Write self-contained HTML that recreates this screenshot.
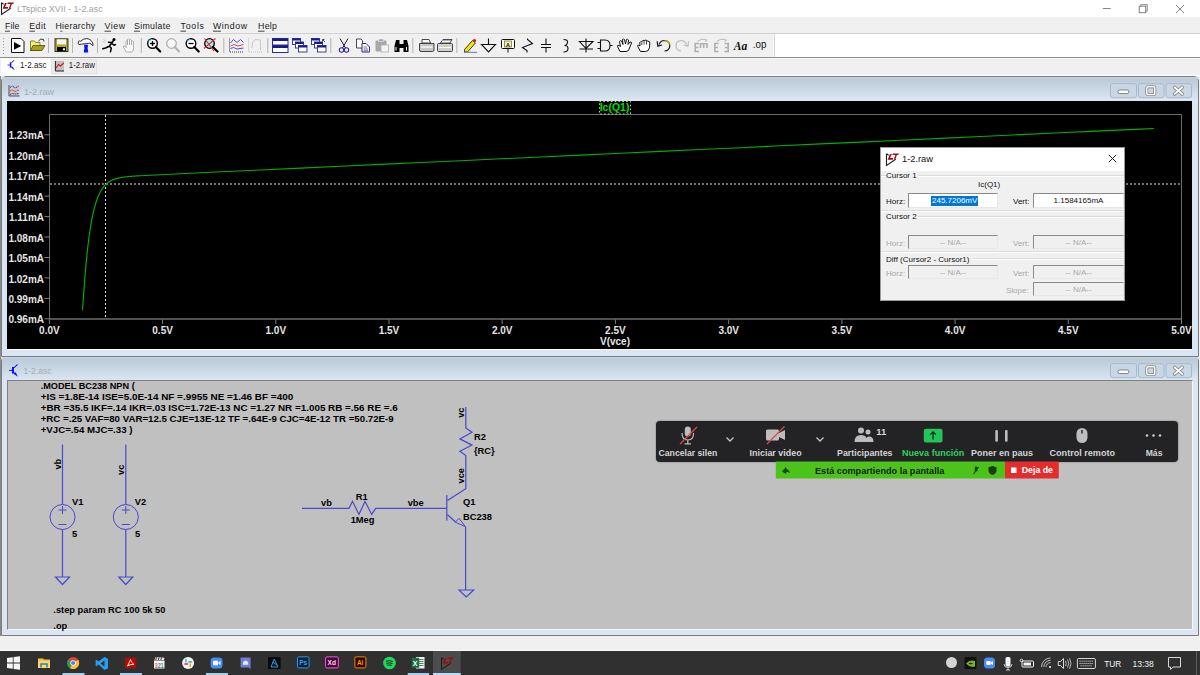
<!DOCTYPE html>
<html><head><meta charset="utf-8">
<style>
*{box-sizing:border-box;margin:0;padding:0}
html,body{width:1200px;height:675px;overflow:hidden;background:#f0f0f0;font-family:"Liberation Sans",sans-serif;position:relative}
.a{position:absolute}
svg text{font-family:"Liberation Sans",sans-serif}
.pl{fill:#e6e6e6;font-size:10px;font-weight:bold}
.sc{fill:#000;font-size:9.3px;font-weight:bold}
#title{left:0;top:0;width:1200px;height:17px;background:#fff}
#title .t{left:17px;top:2px;font-size:11.5px;color:#9a9a9a;white-space:nowrap}
#menu{left:0;top:17px;width:1200px;height:16px;background:#f0f0f0}
#menu span{position:absolute;top:2px;font-size:11px;color:#111;white-space:nowrap}
#tb{left:0;top:33px;width:1200px;height:24px;background:#fff;border-top:1px solid #a0a0a0;border-bottom:1px solid #a0a0a0}
#tbg{left:0;top:0;width:774px;height:22px;background:#f0f0f0;border-right:1px solid #ddd}
#tabs{left:0;top:57px;width:1200px;height:19px;background:#f0f0f0}
.win{background:#dae6f3;border:1px solid #7c7c7c}
.wt{left:0;top:0;right:0;height:24px;background:linear-gradient(#c6d3e0,#bccbd9 10%,#dbe7f3)}
.wt .n{left:20px;top:6px;font-size:11px;color:#9aa3ab}
.wbtn{top:5px;width:26px;height:15px;border:1px solid #a9b7c5;border-radius:3px;background:linear-gradient(#d3dde8,#c7d3df)}
.et{height:2px;border-top:1px solid #dcdcdc;border-bottom:1px solid #fff}
.dl{font-size:8px;color:#111;white-space:nowrap;line-height:11px}
.dis{color:#a8a8a8}
.ib{border:1px solid;border-color:#8a8a8a #e8e8e8 #e8e8e8 #8a8a8a}
.zl text{fill:#d4d4d4;font-size:8.6px;font-weight:bold}
.zs{fill:#1a1a1a;font-size:8.8px;font-weight:bold}
#taskbar{left:0;top:651px;width:1200px;height:24px;background:#2b2b2b}
</style></head><body>
<div class="a" style="left:0;top:76px;width:1px;height:560px;background:#8a8a8a"></div>
<div id="w1" class="a win" style="left:1px;top:76px;width:1198px;height:281px;border-radius:5px 5px 0 0">
  <div class="a wt"></div>
  <div class="a" style="left:5px;top:24px;width:1185px;height:249px;background:#000;border-bottom:1px solid #fff"></div>
</div>
<div id="w2" class="a win" style="left:1px;top:356px;width:1198px;height:280px;border-radius:5px 5px 0 0">
  <div class="a wt"></div>
  <div class="a" style="left:5px;top:23px;width:1186px;height:250px;background:#c0c0c0;border-left:1px solid #808080;border-top:1px solid #808080;border-bottom:1px solid #f6f6f6;border-right:1px solid #f6f6f6"></div>
</div>
<svg class="a" style="left:0;top:0" width="1200" height="675" viewBox="0 0 1200 675">
<!-- title bar -->
<rect x="0" y="0" width="1200" height="17.5" fill="#fff"/>
<g><path d="M1.5 2.5 V14.5 L10.7 8.3 M1.5 2.8 L3.6 4.3" fill="none" stroke="#202020" stroke-width="1.1"/>
 <path d="M4.9 3 H6.8 L5.1 7.1 H8.2 L7.7 8.7 H2.7 Z" fill="#a00c0c"/>
 <path d="M7.8 2.5 H13.9 L13.3 4.1 H11.9 L10.2 8.4 H8.7 L10.4 4.1 H7.3 Z" fill="#a00c0c"/></g>
<text x="17" y="11.6" textLength="85.6" lengthAdjust="spacingAndGlyphs" style="font-size:9.6px;fill:#a0a0a0">LTspice XVII - 1-2.asc</text>
<path d="M1102.8 8.5 H1110.6" stroke="#777" stroke-width="0.9"/>
<rect x="1139.2" y="6.2" width="6.5" height="6.5" fill="none" stroke="#777" stroke-width="0.9"/>
<path d="M1140.8 6.2 V4.7 H1147.2 V11.2 H1145.7" fill="none" stroke="#777" stroke-width="0.9"/>
<path d="M1176 5 L1184 13 M1184 5 L1176 13" stroke="#777" stroke-width="0.9"/>
<!-- menu -->
<rect x="0" y="17.5" width="1200" height="15.5" fill="#f0f0f0"/>
<g style="font-size:8.8px;fill:#1a1a1a">
 <text x="5" y="29.3" textLength="14.3">File</text>
 <text x="29.3" y="29.3" textLength="16.5">Edit</text>
 <text x="55.5" y="29.3" textLength="39.7">Hierarchy</text>
 <text x="104.5" y="29.3" textLength="20.5">View</text>
 <text x="134" y="29.3" textLength="36.5">Simulate</text>
 <text x="180.5" y="29.3" textLength="23.5">Tools</text>
 <text x="213" y="29.3" textLength="34">Window</text>
 <text x="258" y="29.3" textLength="19">Help</text>
</g>
<g stroke="#1a1a1a" stroke-width="0.8">
 <path d="M5 31.2 H10 M29.3 31.2 H35 M60.3 31.2 H62.3 M104.5 31.2 H111 M134 31.2 H140 M180.5 31.2 H186 M213 31.2 H221 M258 31.2 H264.5"/>
</g>
<rect x="0" y="33" width="1200" height="1" fill="#d2d2d2"/>
<!-- toolbar band -->
<rect x="0" y="34" width="1200" height="23" fill="#fff"/>
<rect x="0" y="34" width="774" height="23" fill="#f0f0f0"/>
<rect x="773" y="34" width="1" height="23" fill="#fafafa"/><rect x="774" y="34" width="1" height="23" fill="#d4d4d4"/>
<rect x="0" y="57" width="1200" height="1" fill="#8c8c8c"/>
<!-- tabs -->
<rect x="0" y="58" width="1200" height="17" fill="#f0f0f0"/>
<rect x="0" y="58" width="1200" height="1" fill="#f8f8f8"/>
<rect x="1" y="58" width="50" height="17.5" fill="#fff"/>
<rect x="51.5" y="59.5" width="45" height="14" fill="#ebebeb" stroke="#e2e2e2" stroke-width="1"/>
<text x="20" y="68.4" textLength="26.5" lengthAdjust="spacingAndGlyphs" style="font-size:8.8px;fill:#1a1a1a">1-2.asc</text>
<text x="68.8" y="68.4" textLength="26" lengthAdjust="spacingAndGlyphs" style="font-size:8.8px;fill:#1a1a1a">1-2.raw</text>
<rect x="0" y="75" width="1200" height="1" fill="#fff"/>
<!-- asc tab icon (transistor) -->
<g fill="#1010f0" transform="translate(0.3 -227.6) scale(0.79)">
<rect x="12" y="367" width="2" height="6.6"/>
<rect x="9.1" y="369.9" width="3" height="1"/>
<path d="M13.8 367.3 L17.2 364 L17.9 364.8 L14.2 368.3 Z"/>
<path d="M13.8 372.5 L15.8 372.6 L18 376.8 L14.2 374.2 Z"/>
</g>
<!-- raw tab icon -->
<rect x="55" y="61" width="9" height="10" fill="#c0c0c0"/>
<path d="M55.4 61 V71 H64" fill="none" stroke="#222" stroke-width="1"/>
<path d="M56 68 L58.5 64.5 L60.5 66 L63.8 63" fill="none" stroke="#e01010" stroke-width="1.1"/>
<!-- MDI window 1 title -->
<g transform="translate(8.5 85)">
 <rect x="0" y="0" width="11" height="11" fill="#c8c8c8"/>
 <path d="M0.5 0 V11 H11" fill="none" stroke="#555" stroke-width="1"/>
 <path d="M1.5 2.5 L4 1 L6.5 3 L10.5 1" fill="none" stroke="#3030d0" stroke-width="1" stroke-dasharray="1.2 .6"/>
 <path d="M1.5 6 L4 5 L6.5 6.5 L10.5 5" fill="none" stroke="#e03030" stroke-width="1" stroke-dasharray="1.2 .6"/>
 <path d="M1.5 9.5 L4 8.5 L6.5 9 L10.5 8.5" fill="none" stroke="#3030d0" stroke-width="1" stroke-dasharray="1.2 .6"/>
</g>
<text x="24" y="94.5" textLength="30" lengthAdjust="spacingAndGlyphs" style="font-size:9.5px;fill:#a4acb4">1-2.raw</text>
<!-- MDI window 2 title -->
<g fill="#1010f0">
<rect x="12" y="367" width="2" height="6.6"/>
<rect x="9.1" y="369.9" width="3" height="1"/>
<path d="M13.8 367.3 L17.2 364 L17.9 364.8 L14.2 368.3 Z"/>
<path d="M13.8 372.5 L15.8 372.6 L18 376.8 L14.2 374.2 Z"/>
</g>
<text x="23.5" y="374.3" textLength="28" lengthAdjust="spacingAndGlyphs" style="font-size:9.5px;fill:#a4acb4">1-2.asc</text>
<g transform="translate(0 83.2)">
 <rect x="1110.5" y="0.5" width="26" height="14" rx="2" fill="#c9d6e3" stroke="#a9b9ca" stroke-width="1"/>
 <rect x="1138.5" y="0.5" width="25.5" height="14" rx="2" fill="#c9d6e3" stroke="#a9b9ca" stroke-width="1"/>
 <rect x="1166" y="0.5" width="25.5" height="14" rx="2" fill="#c9d6e3" stroke="#a9b9ca" stroke-width="1"/>
 <rect x="1118" y="6.8" width="10.8" height="3.5" rx="1.5" fill="#fff" stroke="#6a6a6a" stroke-width="0.8"/>
 <rect x="1146.8" y="3.6" width="8" height="7.6" rx="1" fill="none" stroke="#707070" stroke-width="2.8"/>
 <rect x="1146.8" y="3.6" width="8" height="7.6" rx="1" fill="none" stroke="#fff" stroke-width="1.5"/>
 <path d="M1174.6 4 L1182.2 10.8 M1182.2 4 L1174.6 10.8" stroke="#707070" stroke-width="3.2" stroke-linecap="round"/>
 <path d="M1174.6 4 L1182.2 10.8 M1182.2 4 L1174.6 10.8" stroke="#fff" stroke-width="1.9" stroke-linecap="round"/>
</g>
<g transform="translate(0 363.2)">
 <rect x="1110.5" y="0.5" width="26" height="14" rx="2" fill="#c9d6e3" stroke="#a9b9ca" stroke-width="1"/>
 <rect x="1138.5" y="0.5" width="25.5" height="14" rx="2" fill="#c9d6e3" stroke="#a9b9ca" stroke-width="1"/>
 <rect x="1166" y="0.5" width="25.5" height="14" rx="2" fill="#c9d6e3" stroke="#a9b9ca" stroke-width="1"/>
 <rect x="1118" y="6.8" width="10.8" height="3.5" rx="1.5" fill="#fff" stroke="#6a6a6a" stroke-width="0.8"/>
 <rect x="1146.8" y="3.6" width="8" height="7.6" rx="1" fill="none" stroke="#707070" stroke-width="2.8"/>
 <rect x="1146.8" y="3.6" width="8" height="7.6" rx="1" fill="none" stroke="#fff" stroke-width="1.5"/>
 <path d="M1174.6 4 L1182.2 10.8 M1182.2 4 L1174.6 10.8" stroke="#707070" stroke-width="3.2" stroke-linecap="round"/>
 <path d="M1174.6 4 L1182.2 10.8 M1182.2 4 L1174.6 10.8" stroke="#fff" stroke-width="1.9" stroke-linecap="round"/>
</g>
</svg>

<svg class="a" style="left:0;top:0" width="780" height="60" viewBox="0 0 780 60">
<!-- grip -->
<g fill="#a0a0a0"><rect x="3" y="38" width="1" height="1"/><rect x="3" y="41" width="1" height="1"/><rect x="3" y="44" width="1" height="1"/><rect x="3" y="47" width="1" height="1"/><rect x="3" y="50" width="1" height="1"/><rect x="3" y="53" width="1" height="1"/></g>
<!-- separators -->
<g fill="#b4b4b4">
<rect x="48" y="38" width="1" height="15"/><rect x="72" y="38" width="1" height="15"/><rect x="97" y="38" width="1" height="15"/>
<rect x="140.8" y="38" width="1" height="15"/><rect x="223.3" y="38" width="1" height="15"/><rect x="267.3" y="38" width="1" height="15"/>
<rect x="330.3" y="38" width="1" height="15"/><rect x="412.3" y="38" width="1" height="15"/><rect x="456.3" y="38" width="1" height="15"/>
</g>
<!-- run doc -->
<path d="M11.5 38.5 H21 L24 41.5 V52.5 H11.5 Z" fill="#fff" stroke="#111" stroke-width="1"/>
<path d="M14 42 L21.3 46 L14 49.8 Z" fill="#000"/>
<!-- open folder -->
<path d="M30.5 41 H34.5 L35.5 42.5 H40 V50.5 H30.5 Z" fill="#f0f07a" stroke="#6a6a10" stroke-width="0.8"/>
<path d="M30.5 50.5 L33 45.5 H45 L42 50.5 Z" fill="#a8a020" stroke="#4a4a08" stroke-width="0.8"/>
<path d="M38.5 41 Q40.5 38 43.5 39.5 L44 41.5" fill="none" stroke="#333" stroke-width="1"/>
<!-- save -->
<rect x="55" y="38.8" width="13" height="12.8" fill="#b0a820" stroke="#222" stroke-width="0.9"/>
<rect x="57" y="39.3" width="9" height="5.2" fill="#f4f4f4"/>
<rect x="57" y="47" width="9" height="4.3" fill="#000"/>
<rect x="63" y="48.3" width="2" height="2" fill="#fff"/>
<!-- hammer -->
<path d="M78.3 41.5 Q79.5 40.5 80.5 41.3 Q83 38.5 87 38.6 Q91.5 39.2 93 44 L92.8 45.8 Q91.5 43.5 89.5 43.2 Q86 43.8 84 43.8 Q81.5 44 80 44.5 Q78.5 45 78.3 43.5 Z" fill="#fff" stroke="#1a1a1a" stroke-width="0.9"/>
<path d="M84 44.8 H88 L87.6 48.5 Q88.2 49.5 88.2 52.5 H83.8 Q83.8 49.5 84.5 48.5 Z" fill="#0818e8"/>
<!-- runner -->
<g fill="none" stroke="#000" stroke-width="1.5" stroke-linecap="round" stroke-linejoin="round">
<path d="M113.5 40.5 L109.3 46.3 L105.5 48 L102.8 48.8 M109.3 46.3 L111.3 48 L110.5 51.8 M111.5 43.3 L114.2 45.2 L115.5 44.6 M111.8 42.5 L108.5 42.3"/>
</g>
<circle cx="114" cy="39.6" r="1.5" fill="#000"/>
<path d="M103.5 39.5 L106.3 41.3 M102.8 41.3 L105 42.5" stroke="#bbb" stroke-width="0.8"/>
<!-- hand gray -->
<path d="M126 52 L123.5 47 Q123 45.5 124.5 46 L126 47.5 V41 Q126.5 39.8 127.5 41 V45 V39.5 Q128.5 38.2 129.5 39.5 V45 V39.8 Q130.5 38.8 131.5 40 V45 V41.5 Q132.5 40.5 133.5 41.5 V48 Q133.5 51 132 52 Z" fill="#f8f8f8" stroke="#a8a8a8" stroke-width="0.9"/>
<!-- zoom in -->
<g>
<circle cx="152.5" cy="43.5" r="4.8" fill="#fff" stroke="#000" stroke-width="1.4"/>
<path d="M148.5 41.5 Q150 39.5 152 39.5" stroke="#30d0e8" stroke-width="1.2" fill="none"/>
<path d="M155.8 47 L160.2 51.5" stroke="#000" stroke-width="2.2" stroke-linecap="round"/>
<path d="M150 43.5 H155 M152.5 41 V46" stroke="#000" stroke-width="1.3"/>
</g>
<!-- zoom gray -->
<circle cx="171.5" cy="43.5" r="4.8" fill="#f6f6f6" stroke="#b0b0b0" stroke-width="1.3"/>
<path d="M174.8 47 L179 51.5" stroke="#b0b0b0" stroke-width="2" stroke-linecap="round"/>
<!-- zoom out -->
<circle cx="191" cy="43.5" r="4.8" fill="#fff" stroke="#000" stroke-width="1.4"/>
<path d="M187 41.5 Q188.5 39.5 190.5 39.5" stroke="#30d0e8" stroke-width="1.2" fill="none"/>
<path d="M194.3 47 L198.7 51.5" stroke="#000" stroke-width="2.2" stroke-linecap="round"/>
<path d="M188.5 43.5 H193.5" stroke="#000" stroke-width="1.3"/>
<!-- zoom cancel -->
<circle cx="209.5" cy="43.5" r="4.8" fill="#a0f0f8" stroke="#000" stroke-width="1.3"/>
<path d="M212.8 47 L217.5 51.5" stroke="#000" stroke-width="2.2" stroke-linecap="round"/>
<path d="M204.5 38.5 L214 51 M215.5 38.5 L204 48.5" stroke="#f02020" stroke-width="1.1"/>
<!-- plot icon -->
<path d="M229.5 38.5 V52 H244" fill="none" stroke="#222" stroke-width="0.9" stroke-dasharray="1 1"/>
<path d="M230.5 43 L233.5 39.5 L237 42.5 L240.5 39.5 L243.5 42.5" fill="none" stroke="#3a3ad8" stroke-width="0.9"/>
<path d="M230.5 46 L234 44.5 L238 46 L243.5 44.5" fill="none" stroke="#e03030" stroke-width="0.9"/>
<path d="M230.5 48.5 L233.5 47.5 L237 49 L243.5 48" fill="none" stroke="#3a3ad8" stroke-width="0.9"/>
<!-- gray plot icon -->
<path d="M248.5 38.5 V52 H263" fill="none" stroke="#b8b8b8" stroke-width="0.9" stroke-dasharray="1 1"/>
<path d="M252 48 Q252 40 256 39.5 L260.5 40 V50" fill="none" stroke="#c4c4c4" stroke-width="0.9"/>
<!-- tile -->
<rect x="272.5" y="38.5" width="15.5" height="6.5" fill="#fff" stroke="#2a2a9a" stroke-width="1"/>
<rect x="272.5" y="38.5" width="15.5" height="2.5" fill="#1a1a8a"/>
<rect x="272.5" y="45.5" width="15.5" height="7" fill="#fff" stroke="#2a2a9a" stroke-width="1"/>
<rect x="272.5" y="45.5" width="15.5" height="2.5" fill="#1a1a8a"/>
<!-- cascade -->
<g id="casc">
<rect x="292.5" y="38.5" width="8" height="6" fill="#fff" stroke="#2a2a9a" stroke-width="0.9"/><rect x="292.5" y="38.5" width="8" height="2" fill="#1a1a8a"/>
<rect x="295.5" y="42" width="8" height="6" fill="#fff" stroke="#2a2a9a" stroke-width="0.9"/><rect x="295.5" y="42" width="8" height="2" fill="#1a1a8a"/>
<rect x="298.5" y="45.5" width="8.5" height="6.5" fill="#fff" stroke="#2a2a9a" stroke-width="0.9"/><rect x="298.5" y="45.5" width="8.5" height="2" fill="#1a1a8a"/>
</g>
<g transform="translate(19 0)">
<rect x="292.5" y="38.5" width="8" height="6" fill="#fff" stroke="#2a2a9a" stroke-width="0.9"/><rect x="292.5" y="38.5" width="8" height="2" fill="#1a1a8a"/>
<rect x="295.5" y="42" width="8" height="6" fill="#fff" stroke="#2a2a9a" stroke-width="0.9"/><rect x="295.5" y="42" width="8" height="2" fill="#1a1a8a"/>
<rect x="298.5" y="45.5" width="8.5" height="6.5" fill="#fff" stroke="#2a2a9a" stroke-width="0.9"/><rect x="298.5" y="45.5" width="8.5" height="2" fill="#1a1a8a"/>
<path d="M306 42 L303.5 39.5 M303.5 41.5 V39.5 H305.5" fill="none" stroke="#333" stroke-width="0.9"/>
</g>
<!-- scissors -->
<path d="M340 38.5 L345.5 48 M348 38.5 L342.5 48" stroke="#222" stroke-width="1"/>
<circle cx="341.5" cy="50" r="2.2" fill="none" stroke="#2a2ab0" stroke-width="1.1"/>
<circle cx="346.5" cy="50" r="2.2" fill="none" stroke="#2a2ab0" stroke-width="1.1"/>
<!-- copy -->
<path d="M356.5 39 H361 L362.5 40.5 V48 H356.5 Z" fill="#fff" stroke="#333" stroke-width="0.9"/>
<path d="M362 43.5 H366 L369.5 47 V52 H362 Z" fill="#fff" stroke="#2a2a9a" stroke-width="1"/>
<path d="M363.5 47 H367 M363.5 49 H368 M363.5 50.8 H368" stroke="#333" stroke-width="0.7"/>
<!-- paste gray -->
<rect x="375.5" y="40.5" width="11" height="11" rx="1" fill="#a8a8a8"/>
<rect x="378.5" y="39" width="5" height="2.5" fill="#a8a8a8" stroke="#f0f0f0" stroke-width="0.6"/>
<rect x="381" y="45" width="7.5" height="7" fill="#f4f4f4" stroke="#b0b0b0" stroke-width="0.8"/>
<!-- binoculars -->
<path d="M394.5 52 V46 L396 40 H399.5 V44 H403.5 V40 H407 L408.5 46 V52 H403.5 V48 H399.5 V52 Z" fill="#000"/>
<path d="M396 47 V50.5 M406.5 47 V50.5" stroke="#fff" stroke-width="1"/>
<!-- printer -->
<path d="M422 39.5 H429 L430.5 43 H422 Z" fill="#fff" stroke="#333" stroke-width="0.9"/>
<path d="M419.5 43.5 H434 V50 Q434 51.5 432.5 51.5 H421 Q419.5 51.5 419.5 50 Z" fill="#c8c8c8" stroke="#333" stroke-width="0.9"/>
<rect x="421" y="46.5" width="11.5" height="1.2" fill="#fff"/>
<!-- printer2 -->
<path d="M440.5 43 L443 39.5 H452 L450 43 Z" fill="#fff" stroke="#333" stroke-width="0.9"/>
<path d="M442 40.5 L451 40.5" stroke="#999" stroke-width="0.8"/>
<rect x="437.5" y="43.5" width="15" height="8" rx="1" fill="#d0d0d0" stroke="#333" stroke-width="0.9"/>
<rect x="439" y="47" width="12" height="1" fill="#fff"/><rect x="444" y="46" width="3" height="1" fill="#e0d020"/>
<!-- pencil -->
<path d="M464.5 49.5 L472.5 40.5 L475.5 43 L467.5 52 L464.5 52 Z" fill="#f0e800" stroke="#222" stroke-width="0.9"/>
<circle cx="474.5" cy="40.5" r="1.6" fill="#e81010"/>
<rect x="464" y="51.8" width="13" height="1.2" fill="#8080f0"/>
<!-- ground -->
<path d="M488.5 38.5 V44 M481.5 44.5 H495.5 L488.5 52 Z" fill="none" stroke="#111" stroke-width="1.1"/>
<!-- label -->
<rect x="501.5" y="39.5" width="13" height="9" rx="1" fill="#fffff0" stroke="#111" stroke-width="1"/>
<rect x="504.5" y="41" width="7" height="6" fill="#f4f4a0" stroke="#444" stroke-width="0.6"/>
<text x="508" y="46.5" text-anchor="middle" style="font-size:5.5px;font-weight:bold;fill:#111">A</text>
<path d="M508 48.5 V52.5" stroke="#111" stroke-width="1"/>
<!-- resistor -->
<path d="M527.5 38.5 V39.5 L532.5 43.5 L522.5 47.5 L527 50.5 V52.5" fill="none" stroke="#111" stroke-width="1.1"/>
<!-- capacitor -->
<path d="M546 38.5 V44 M541 44.5 H551 M541 47.5 H551 M546 48 V52.5" fill="none" stroke="#111" stroke-width="1.1"/>
<!-- inductor -->
<path d="M563.5 39.5 Q568 39.5 567.5 42.5 Q567 45.5 564.5 45.5 Q568 45.5 568 48.5 Q568 52 563.5 52" fill="none" stroke="#111" stroke-width="1.1"/>
<!-- diode -->
<path d="M586 38.5 V52.5 M579.5 41.5 H593 L586 48.5 Z M579.5 49 H593" fill="none" stroke="#111" stroke-width="1.1"/>
<!-- and gate -->
<path d="M600.5 40 H605 Q610 40 610 45.5 Q610 51 605 51 H600.5 Z M597.5 42.5 H600.5 M597.5 48.5 H600.5 M610 45.5 H612.5" fill="none" stroke="#111" stroke-width="1.1"/>
<!-- hand 1 -->
<path d="M620 51.5 L617.5 46.5 Q617 45 619 45.5 L620.5 46.5 L619.5 41.5 Q620 40 621.5 41 L623 44.5 L622.5 39.5 Q623.5 38.5 624.5 39.5 L625.5 44 L626.5 39.5 Q627.5 38.8 628.5 40 L628 44.5 L630 42 Q631.5 41.5 631.5 43 L629.5 48 Q629 51.5 626 51.5 Z" fill="#fff" stroke="#111" stroke-width="1"/>
<!-- hand 2 -->
<path d="M640.5 51.5 L637.8 46.5 Q637.3 45 638.8 45.3 L640 46 L639.8 42.5 Q640.3 41.3 641.5 42 L642.2 41 Q643 39.8 644.2 40.6 L645 40.3 Q646.2 39.6 647 40.8 L648 41.2 Q649.8 41.2 649.8 43 L649.5 47.5 Q648.8 51.5 645.5 51.5 Z" fill="#fff" stroke="#111" stroke-width="1"/>
<path d="M641.8 42.5 V45 M644 41 V44.5 M646.5 41 V44.5" stroke="#111" stroke-width="0.8"/>
<!-- undo -->
<path d="M659 44.5 Q660.5 40.5 664.5 40.5 Q669.8 41 669.8 46 Q669.5 50.8 664.5 51" fill="none" stroke="#1a1a1a" stroke-width="1.2"/>
<path d="M664.5 40.6 Q668.5 41 669.6 44.5" fill="none" stroke="#c8b000" stroke-width="1.2"/>
<path d="M657.2 41.2 L657.8 46.2 L662 45" fill="none" stroke="#1a1a1a" stroke-width="1.2"/>
<!-- redo gray -->
<path d="M686.5 44.5 Q685 40.5 681 40.5 Q676 41 676 46 Q676.3 50.8 681 51" fill="none" stroke="#bcbcbc" stroke-width="1.2"/>
<path d="M688.5 41.2 L688 46.2 L683.8 45" fill="none" stroke="#bcbcbc" stroke-width="1.2"/>
<!-- mirror gray -->
<g fill="none" stroke="#b0b0b0" stroke-width="1.6">
<path d="M699 43.5 H695.2 V51.5 H699 M695.2 47.5 H698.5 M700.5 48 V43.8 H707 V48 M703.7 43.8 V48"/>
<path d="M718.5 43.5 H714.8 V51.5 H718.5 M714.8 47.5 H718 M724.5 43.5 H728.2 V51.5 H724.5 M728.2 47.5 H725"/>
</g>
<g fill="none" stroke="#b8b8b8" stroke-width="1">
<path d="M697.5 41.5 Q701 38.3 705.5 39.3 L706.5 40.8 M705 41.3 L706.5 40.8 L706.8 39.2"/>
<path d="M716.5 41.5 Q720.5 38.3 725 39.3 L726 40.8 M724.5 41.3 L726 40.8 L726.3 39.2"/>
</g>
<!-- Aa -->
<text x="733.8" y="50.3" textLength="13.5" lengthAdjust="spacingAndGlyphs" style="font-family:'Liberation Serif',serif;font-size:12.5px;font-weight:bold;font-style:italic;fill:#111">Aa</text>
<!-- .op -->
<text x="752.8" y="48.3" textLength="13.6" lengthAdjust="spacingAndGlyphs" style="font-size:10.4px;fill:#111">.op</text>
</svg>

<svg class="a" style="left:0;top:0" width="1200" height="675" viewBox="0 0 1200 675">
<path d="M49.5 319 V114.5 H1181.5 V319" fill="none" stroke="#6c6c6c" stroke-width="1"/>
<path d="M49 319 H1182" fill="none" stroke="#a0a0a0" stroke-width="1"/>
<line x1="44.5" y1="134.8" x2="49.5" y2="134.8" stroke="#808080"/>
<text x="44" y="139.4" text-anchor="end" class="pl">1.23mA</text>
<line x1="44.5" y1="155.2" x2="49.5" y2="155.2" stroke="#808080"/>
<text x="44" y="159.8" text-anchor="end" class="pl">1.20mA</text>
<line x1="44.5" y1="175.7" x2="49.5" y2="175.7" stroke="#808080"/>
<text x="44" y="180.3" text-anchor="end" class="pl">1.17mA</text>
<line x1="44.5" y1="196.1" x2="49.5" y2="196.1" stroke="#808080"/>
<text x="44" y="200.7" text-anchor="end" class="pl">1.14mA</text>
<line x1="44.5" y1="216.6" x2="49.5" y2="216.6" stroke="#808080"/>
<text x="44" y="221.2" text-anchor="end" class="pl">1.11mA</text>
<line x1="44.5" y1="237.0" x2="49.5" y2="237.0" stroke="#808080"/>
<text x="44" y="241.6" text-anchor="end" class="pl">1.08mA</text>
<line x1="44.5" y1="257.5" x2="49.5" y2="257.5" stroke="#808080"/>
<text x="44" y="262.1" text-anchor="end" class="pl">1.05mA</text>
<line x1="44.5" y1="277.9" x2="49.5" y2="277.9" stroke="#808080"/>
<text x="44" y="282.5" text-anchor="end" class="pl">1.02mA</text>
<line x1="44.5" y1="298.4" x2="49.5" y2="298.4" stroke="#808080"/>
<text x="44" y="303.0" text-anchor="end" class="pl">0.99mA</text>
<line x1="44.5" y1="318.8" x2="49.5" y2="318.8" stroke="#808080"/>
<text x="44" y="323.4" text-anchor="end" class="pl">0.96mA</text>
<line x1="49.4" y1="319.5" x2="49.4" y2="324" stroke="#808080"/>
<text x="49.4" y="333.6" text-anchor="middle" class="pl">0.0V</text>
<line x1="162.6" y1="319.5" x2="162.6" y2="324" stroke="#808080"/>
<text x="162.6" y="333.6" text-anchor="middle" class="pl">0.5V</text>
<line x1="275.8" y1="319.5" x2="275.8" y2="324" stroke="#808080"/>
<text x="275.8" y="333.6" text-anchor="middle" class="pl">1.0V</text>
<line x1="389.0" y1="319.5" x2="389.0" y2="324" stroke="#808080"/>
<text x="389.0" y="333.6" text-anchor="middle" class="pl">1.5V</text>
<line x1="502.2" y1="319.5" x2="502.2" y2="324" stroke="#808080"/>
<text x="502.2" y="333.6" text-anchor="middle" class="pl">2.0V</text>
<line x1="615.4" y1="319.5" x2="615.4" y2="324" stroke="#808080"/>
<text x="615.4" y="333.6" text-anchor="middle" class="pl">2.5V</text>
<line x1="728.7" y1="319.5" x2="728.7" y2="324" stroke="#808080"/>
<text x="728.7" y="333.6" text-anchor="middle" class="pl">3.0V</text>
<line x1="841.9" y1="319.5" x2="841.9" y2="324" stroke="#808080"/>
<text x="841.9" y="333.6" text-anchor="middle" class="pl">3.5V</text>
<line x1="955.1" y1="319.5" x2="955.1" y2="324" stroke="#808080"/>
<text x="955.1" y="333.6" text-anchor="middle" class="pl">4.0V</text>
<line x1="1068.3" y1="319.5" x2="1068.3" y2="324" stroke="#808080"/>
<text x="1068.3" y="333.6" text-anchor="middle" class="pl">4.5V</text>
<line x1="1181.5" y1="319.5" x2="1181.5" y2="324" stroke="#808080"/>
<text x="1181.5" y="333.6" text-anchor="middle" class="pl">5.0V</text>
<text x="615" y="345" text-anchor="middle" class="pl">V(vce)</text>
<line x1="105.5" y1="115" x2="105.5" y2="318" stroke="#e0e0e0" stroke-dasharray="2 2"/>
<line x1="50" y1="184" x2="1181" y2="184" stroke="#e0e0e0" stroke-dasharray="2 2"/>
<path d="M82.5 310.4 L83.2 299.3 L84.0 289.2 L84.7 279.8 L85.4 271.3 L86.1 263.4 L86.8 256.3 L87.5 249.7 L88.2 243.6 L88.9 238.1 L89.6 233.0 L90.3 228.4 L91.0 224.1 L91.7 220.2 L92.4 216.6 L93.1 213.3 L93.8 210.3 L94.5 207.6 L95.2 205.0 L95.9 202.7 L96.6 200.6 L97.3 198.6 L98.0 196.8 L98.7 195.2 L99.4 193.7 L100.1 192.3 L100.8 191.0 L101.5 189.8 L102.2 188.8 L102.9 187.8 L103.6 186.9 L104.3 186.0 L105.0 185.3 L105.7 184.6 L106.4 183.9 L107.1 183.3 L107.8 182.8 L108.5 182.2 L109.2 181.8 L109.9 181.4 L110.6 181.0 L111.3 180.6 L112.0 180.2 L112.7 179.9 L113.4 179.6 L114.1 179.4 L114.8 179.1 L115.5 178.9 L116.2 178.7 L116.9 178.5 L117.6 178.3 L118.3 178.1 L119.0 178.0 L119.7 177.8 L120.4 177.7 L121.1 177.5 L121.8 177.4 L122.5 177.3 L123.2 177.2 L123.9 177.1 L124.6 177.0 L125.3 176.9 L126.0 176.8 L126.7 176.7 L127.4 176.7 L128.1 176.6 L128.8 176.5 L129.5 176.5 L130.2 176.4 L130.9 176.3 L131.6 176.3 L132.3 176.2 L133.0 176.2 L133.7 176.1 L134.4 176.1 L135.1 176.0 L135.8 176.0 L136.5 175.9 L137.2 175.9 L137.9 175.8 L138.6 175.8 L139.2 175.7 L139.9 175.7 L140.6 175.7 L180.6 173.7 L220.6 171.8 L260.6 170.0 L300.6 168.1 L340.6 166.3 L380.6 164.4 L420.6 162.5 L460.6 160.7 L500.6 158.8 L540.6 157.0 L580.6 155.1 L620.6 153.2 L660.6 151.4 L700.6 149.5 L740.6 147.7 L780.6 145.8 L820.6 143.9 L860.6 142.1 L900.6 140.2 L940.6 138.4 L980.6 136.5 L1020.6 134.6 L1060.7 132.8 L1100.7 130.9 L1140.7 129.1 L1153.8 128.5" fill="none" stroke="#00b000" stroke-width="1.15"/>
<rect x="599.5" y="101.5" width="31" height="12.5" fill="#000" stroke="#c8c8c8" stroke-dasharray="1.6 2.2"/>
<text x="614.6" y="110.8" text-anchor="middle" class="pl" style="fill:#00e000;font-size:10.5px">Ic(Q1)</text>
</svg>
<svg class="a" style="left:0;top:0" width="1200" height="675" viewBox="0 0 1200 675">
<g fill="none" stroke="#4848d0" stroke-width="1.2">
<!-- V1 -->
<path d="M62.5 444.5 V504.5 M62.5 529.5 V577 M55.5 577 H69.5 L62.5 584.5 Z"/>
<circle cx="62.5" cy="517" r="12.5" stroke-width="1"/>
<path d="M58.5 510 H66.5 M62.5 506 V514 M58.5 524.5 H66.5" stroke-width="1"/>
<!-- V2 -->
<path d="M125.8 444.5 V504.5 M125.8 529.5 V577 M118.8 577 H132.8 L125.8 584.5 Z"/>
<circle cx="125.8" cy="517" r="12.5" stroke-width="1"/>
<path d="M121.8 510 H129.8 M125.8 506 V514 M121.8 524.5 H129.8" stroke-width="1"/>
<!-- R1 and base wire -->
<path d="M302 508.3 H349 L352.5 501.3 L359 514.4 L365 501.3 L371.7 514.4 L375.7 508.3 H447"/>
<!-- R2 -->
<path d="M465.8 407 V428 L472 432.2 L459.9 438.9 L472 445.1 L459.9 451.3 L465.8 455.5 V488.7 L447.4 500.6"/>
<!-- Q1 base bar -->
<path d="M446.8 495 V520.5"/>
<path d="M447.5 514.8 L455.5 522 M465.6 526.7 V590 M458.9 590 H473.7 L466.3 597 Z"/>
<path d="M465.3 526.6 L459 518.3 L455.3 522.2 Z" stroke-width="1"/>
</g>
<g class="sc">
<text x="40.7" y="389" textLength="94" lengthAdjust="spacingAndGlyphs" style="font-size:9.7px">.MODEL BC238 NPN (</text>
<text x="40.7" y="400" textLength="252.5" lengthAdjust="spacingAndGlyphs" style="font-size:9.7px">+IS =1.8E-14 ISE=5.0E-14 NF =.9955 NE =1.46 BF =400</text>
<text x="40.7" y="411" textLength="357" lengthAdjust="spacingAndGlyphs" style="font-size:9.7px">+BR =35.5 IKF=.14 IKR=.03 ISC=1.72E-13 NC =1.27 NR =1.005 RB =.56 RE =.6</text>
<text x="40.7" y="422" textLength="353" lengthAdjust="spacingAndGlyphs" style="font-size:9.7px">+RC =.25 VAF=80 VAR=12.5 CJE=13E-12 TF =.64E-9 CJC=4E-12 TR =50.72E-9</text>
<text x="40.7" y="433" textLength="91.8" lengthAdjust="spacingAndGlyphs" style="font-size:9.7px">+VJC=.54 MJC=.33 )</text>
<text x="72" y="504.6">V1</text>
<text x="72" y="536.5">5</text>
<text x="134.8" y="504.6">V2</text>
<text x="135" y="536.5">5</text>
<text transform="translate(61 469.6) rotate(-90)">vb</text>
<text transform="translate(124.3 475) rotate(-90)">vc</text>
<text transform="translate(464 417.8) rotate(-90)">vc</text>
<text transform="translate(464 483.5) rotate(-90)">vce</text>
<text x="474" y="439.5">R2</text>
<text x="474" y="453.5">{RC}</text>
<text x="463" y="505">Q1</text>
<text x="463" y="519.5">BC238</text>
<text x="321" y="505.6">vb</text>
<text x="355.7" y="499.7">R1</text>
<text x="350.7" y="523.3">1Meg</text>
<text x="407.7" y="505.6">vbe</text>
<text x="53.3" y="612.8">.step param RC 100 5k 50</text>
<text x="53.3" y="628.5">.op</text>
</g>
</svg>

<div id="dlg" class="a" style="left:880px;top:147px;width:245px;height:154px;background:#f0f0f0;border:1px solid #9a9a9a">
  <div class="a" style="left:0;top:0;width:243px;height:23px;background:#fff"></div>
  <svg class="a" style="left:4px;top:3px" width="16" height="16" viewBox="0 0 16 16"><path d="M1.5 2.5 V14.5 L10.7 8.3 M1.5 2.8 L3.6 4.3" fill="none" stroke="#202020" stroke-width="1.1"/>
 <path d="M4.9 3 H6.8 L5.1 7.1 H8.2 L7.7 8.7 H2.7 Z" fill="#a00c0c"/>
 <path d="M7.8 2.5 H13.9 L13.3 4.1 H11.9 L10.2 8.4 H8.7 L10.4 4.1 H7.3 Z" fill="#a00c0c"/></svg>
  <div class="a dt" style="left:21px;top:6px;font-size:9.3px;color:#111">1-2.raw</div>
  <svg class="a" style="left:227px;top:6px" width="9" height="9" viewBox="0 0 9 9"><path d="M0.8 0.8 L8.2 8.2 M8.2 0.8 L0.8 8.2" stroke="#222" stroke-width="1"/></svg>
  <!-- etched lines -->
  <div class="a et" style="left:0;top:27px;width:5px"></div>
  <div class="a et" style="left:37px;top:27px;width:206px"></div>
  <div class="a et" style="left:0;top:62px;width:243px"></div>
  <div class="a et" style="left:37px;top:68px;width:206px"></div>
  <div class="a et" style="left:0;top:103px;width:243px"></div>
  <div class="a et" style="left:92px;top:110px;width:151px"></div>
  <div class="a dl" style="left:5px;top:22px">Cursor 1</div>
  <div class="a dl" style="left:97px;top:31px">Ic(Q1)</div>
  <div class="a dl" style="left:5px;top:48px">Horz:</div>
  <div class="a ib" style="left:27px;top:45px;width:90px;height:15px;background:#fff"><span class="a" style="left:22px;top:2px;width:47px;height:10px;background:#0078d7"></span><span class="a dl" style="left:23px;top:1px;color:#fff">245.7206mV</span></div>
  <div class="a dl" style="left:132px;top:48px">Vert:</div>
  <div class="a ib" style="left:152px;top:45px;width:91px;height:15px;background:#fff"><span class="a dl" style="left:0;width:89px;text-align:center;top:1px">1.1584165mA</span></div>
  <div class="a dl" style="left:5px;top:63px">Cursor 2</div>
  <div class="a dl dis" style="left:5px;top:90px">Horz:</div>
  <div class="a ib" style="left:27px;top:87px;width:90px;height:14px"><span class="a dl dis" style="left:0;width:88px;text-align:center;top:1px">-- N/A--</span></div>
  <div class="a dl dis" style="left:132px;top:90px">Vert:</div>
  <div class="a ib" style="left:152px;top:87px;width:91px;height:14px"><span class="a dl dis" style="left:0;width:89px;text-align:center;top:1px">-- N/A--</span></div>
  <div class="a dl" style="left:5px;top:106px">Diff (Cursor2 - Cursor1)</div>
  <div class="a dl dis" style="left:5px;top:120px">Horz:</div>
  <div class="a ib" style="left:27px;top:117px;width:90px;height:14px"><span class="a dl dis" style="left:0;width:88px;text-align:center;top:1px">-- N/A--</span></div>
  <div class="a dl dis" style="left:132px;top:120px">Vert:</div>
  <div class="a ib" style="left:152px;top:117px;width:91px;height:14px"><span class="a dl dis" style="left:0;width:89px;text-align:center;top:1px">-- N/A--</span></div>
  <div class="a dl dis" style="left:125px;top:137px">Slope:</div>
  <div class="a ib" style="left:152px;top:134px;width:91px;height:14px"><span class="a dl dis" style="left:0;width:89px;text-align:center;top:1px">-- N/A--</span></div>
</div>

<div id="zb" class="a" style="left:656px;top:420.5px;width:521.5px;height:41px;background:#232325;border-radius:4px;box-shadow:0 0 2px rgba(0,0,0,.4)"></div>
<svg class="a" style="left:0;top:0" width="1200" height="675" viewBox="0 0 1200 675">
 <!-- mic muted -->
 <g fill="none" stroke="#bdbdbd" stroke-width="1.6">
  <rect x="684.8" y="426.5" width="6" height="10" rx="3" fill="#bdbdbd" stroke="none"/>
  <path d="M682 433 Q682 440 687.8 440 Q693.6 440 693.6 433 M687.8 440 V443.5 M684.5 443.8 H691" stroke-width="1.2"/>
 </g>
 <path d="M680 444 L697 427" stroke="#e04848" stroke-width="1.3"/>
 <path d="M726.5 437.5 L730 441 L733.5 437.5" fill="none" stroke="#c8c8c8" stroke-width="1.3"/>
 <!-- video muted -->
 <rect x="766" y="429.5" width="13" height="11" rx="1.5" fill="#bdbdbd"/>
 <path d="M779 433 L785 430 V440 L779 437 Z" fill="#bdbdbd"/>
 <path d="M767 444 L784.5 426.5" stroke="#e04848" stroke-width="1.3"/>
 <path d="M816.5 437.5 L820 441 L823.5 437.5" fill="none" stroke="#c8c8c8" stroke-width="1.3"/>
 <!-- participants -->
 <circle cx="861" cy="430.5" r="3" fill="#bdbdbd"/>
 <path d="M854.5 442 Q854.5 435 861 435 Q867.5 435 867.5 442 Z" fill="#bdbdbd"/>
 <circle cx="868" cy="432" r="2.5" fill="#bdbdbd"/>
 <path d="M865 442 Q866 436.5 869 436.5 Q873.5 436.5 873.5 442 Z" fill="#bdbdbd"/>
 <!-- nueva funcion -->
 <rect x="923.8" y="428.8" width="18.7" height="13.7" rx="2" fill="#23c45a"/>
 <path d="M933.1 439.5 V432 M930.3 434.6 L933.1 431.8 L935.9 434.6" fill="none" stroke="#0e2e16" stroke-width="1.3"/>
 <!-- pause -->
 <rect x="995.3" y="430" width="2.6" height="11.8" rx="1" fill="#bdbdbd"/>
 <rect x="1005" y="430" width="2.6" height="11.8" rx="1" fill="#bdbdbd"/>
 <!-- mouse -->
 <rect x="1076.5" y="428" width="11" height="15" rx="5.5" fill="#bdbdbd"/>
 <rect x="1081.3" y="430" width="1.4" height="3.5" fill="#232325"/>
 <!-- dots -->
 <circle cx="1147" cy="435.5" r="1.3" fill="#c8c8c8"/><circle cx="1153.5" cy="435.5" r="1.3" fill="#c8c8c8"/><circle cx="1160" cy="435.5" r="1.3" fill="#c8c8c8"/>
 <g class="zl">
  <text textLength="58.8" lengthAdjust="spacingAndGlyphs" x="658.5" y="456.3">Cancelar silen</text>
  <text textLength="52" lengthAdjust="spacingAndGlyphs" x="749.6" y="456.3">Iniciar video</text>
  <text textLength="55.5" lengthAdjust="spacingAndGlyphs" x="837" y="456.3">Participantes</text>
  <text textLength="62.3" lengthAdjust="spacingAndGlyphs" x="902" y="456.3" style="fill:#2fd05e">Nueva función</text>
  <text textLength="62" lengthAdjust="spacingAndGlyphs" x="971" y="456.3">Poner en paus</text>
  <text textLength="65.5" lengthAdjust="spacingAndGlyphs" x="1049.5" y="456.3">Control remoto</text>
  <text x="1145.7" y="456.3">Más</text>
  <text x="876.3" y="434.8" style="font-size:9.5px">11</text>
 </g>
 <!-- green share bar -->
 <rect x="775.8" y="461.5" width="229.2" height="17" fill="#4cc31a"/>
 <path d="M782 471.5 L786 467 L786.5 469 Q789 469.5 790 473 Q788 471.5 786.5 472 L786 474 Z" fill="#0f4a0f"/>
 <text textLength="129.3" lengthAdjust="spacingAndGlyphs" x="815" y="473.6" class="zs">Está compartiendo la pantalla</text>
 <path d="M973.5 474 L978.5 467" stroke="#1b3b10" stroke-width="1.1"/>
 <rect x="974.8" y="466.5" width="2.6" height="5" rx="1.3" fill="#1b3b10"/>
 <path d="M992.5 466 L996.5 467.3 V470.5 Q996.5 473.5 992.5 475 Q988.5 473.5 988.5 470.5 V467.3 Z" fill="#1b3b10"/>
 <!-- red stop -->
 <rect x="1005" y="461.5" width="53.8" height="17" fill="#e32d2d"/>
 <rect x="1011" y="467.5" width="5.5" height="5.5" fill="#fff"/>
 <text textLength="31.3" lengthAdjust="spacingAndGlyphs" x="1021.7" y="472.6" class="zs" style="fill:#fff">Deja de</text>
</svg>

<svg class="a" style="left:0;top:0" width="1200" height="675" viewBox="0 0 1200 675">
<rect x="0" y="650" width="1200" height="1" fill="#fafafa"/>
<rect x="0" y="651" width="1200" height="24" fill="#303030"/>
<rect x="433" y="651" width="27.7" height="24" fill="#4c4c4c"/>
<g fill="#a9cfe6">
<rect x="62.5" y="673" width="22" height="2"/><rect x="120" y="673" width="22" height="2"/><rect x="206" y="673" width="22" height="2"/><rect x="407.7" y="673" width="21.3" height="2"/>
</g>
<rect x="433" y="673" width="27.7" height="2" fill="#b8dcf0"/>
<!-- windows -->
<path d="M7 658 L12.8 657.2 V662.6 H7 Z M13.6 657.1 L20 656.3 V662.6 H13.6 Z M7 663.4 H12.8 V668.8 L7 668 Z M13.6 663.4 H20 V669.7 L13.6 668.9 Z" fill="#f4f4f4"/>
<!-- explorer -->
<path d="M38 658.5 H43 L44 659.5 H50 V668 H38 Z" fill="#f0c040"/>
<rect x="38" y="661" width="12" height="7" fill="#ffd765"/>
<path d="M41 667.5 V664 H47 V667.5" fill="none" stroke="#2a7de0" stroke-width="1.6"/>
<!-- chrome -->
<circle cx="73.1" cy="663" r="6" fill="#dd4435"/>
<path d="M73.1 663 L67.9 660 A6 6 0 0 0 70.1 668.2 Z" fill="#21a25a"/>
<path d="M73.1 663 L70.1 668.2 A6 6 0 0 0 79.1 663 L78.3 660 Z" fill="#fbc02d"/>
<path d="M73.1 663 L78.3 660 A6 6 0 0 1 79.1 663 Z" fill="#fbc02d"/>
<circle cx="73.1" cy="663" r="2.8" fill="#fff"/><circle cx="73.1" cy="663" r="2.1" fill="#4285f4"/>
<!-- vscode -->
<path d="M104.5 657 L108 658.8 V668.2 L104.5 670 L98.5 664.6 L96.5 666.2 L95.6 665.6 V660.4 L96.5 659.8 L98.5 661.4 Z M104.5 660.5 L100.5 663.5 L104.5 666.5 Z" fill="#23a0ee" fill-rule="evenodd"/>
<!-- acrobat -->
<rect x="125" y="657.4" width="11.3" height="10.8" rx="1.5" fill="#b30b00"/>
<path d="M127.5 666 Q130.5 660 130.5 659.5 Q131 662.5 134 664.5 Q130 664 127.5 666" fill="none" stroke="#fff" stroke-width="0.9"/>
<!-- clapper -->
<path d="M154.5 660 L155.5 657 L164.5 657.8 L163.8 660 Z" fill="#e8e8e8"/>
<path d="M156.5 657.2 L155.8 660 M159 657.4 L158.3 660 M161.5 657.6 L160.8 660" stroke="#222" stroke-width="0.9"/>
<rect x="154" y="660.5" width="10.5" height="8" fill="#f4f4f4"/>
<text x="154.8" y="667.6" textLength="9" lengthAdjust="spacingAndGlyphs" style="font-size:7px;font-weight:bold;fill:#e07030">3<tspan style="fill:#3a80d0">2</tspan><tspan style="fill:#40a040">1</tspan></text>
<!-- slack -->
<circle cx="188.1" cy="663" r="6" fill="#f4f4f4"/>
<g stroke-width="1.6" stroke-linecap="round"><path d="M186 659.5 V662" stroke="#36c5f0"/><path d="M185 664 H187.5" stroke="#e01e5a"/><path d="M190.2 664 V666.5" stroke="#ecb22e"/><path d="M189 662 H191.5" stroke="#2eb67d"/></g>
<!-- zoom -->
<rect x="210.6" y="657.4" width="11.9" height="11.2" rx="3.5" fill="#4a8cf7"/>
<rect x="213" y="660.8" width="5" height="4.4" rx="0.8" fill="#fff"/><path d="M218.5 662.3 L220.5 661 V665 L218.5 663.7 Z" fill="#fff"/>
<!-- discord -->
<path d="M240.6 657.5 H250.6 V669 L248.6 667.5 H240.6 Z" fill="#6f7fd0"/>
<path d="M242.8 664.8 Q242.8 661 245.6 660.5 Q248.4 661 248.4 664.8 Z" fill="#e6e9ff"/>
<!-- dark app -->
<rect x="268" y="657" width="12.6" height="12" fill="#0a0a0a"/>
<path d="M271 667 L274.3 659 L278 667 Z M272.5 662 L277 665" fill="none" stroke="#1ea0e6" stroke-width="1"/>
<!-- Ps -->
<rect x="297.5" y="656.9" width="11.5" height="11" rx="1.2" fill="#001e36" stroke="#31a8ff" stroke-width="0.9"/>
<text x="299.2" y="665.3" style="font-size:6.5px;font-weight:bold;fill:#31a8ff">Ps</text>
<!-- Xd -->
<rect x="325.6" y="656.9" width="12.7" height="11" rx="1.2" fill="#470137" stroke="#ff61f6" stroke-width="0.9"/>
<text x="327.6" y="665.3" style="font-size:6.5px;font-weight:bold;fill:#ffd6fa">Xd</text>
<!-- Ai -->
<rect x="354.9" y="656.9" width="11" height="11" rx="1.2" fill="#330000" stroke="#ff9a00" stroke-width="0.9"/>
<text x="356.9" y="665.3" style="font-size:6.5px;font-weight:bold;fill:#ff9a00">Ai</text>
<!-- spotify -->
<circle cx="389.5" cy="663" r="6.3" fill="#1ed760"/>
<path d="M386 661.2 Q389.5 660 393 661.6 M386.3 663.3 Q389.5 662.3 392.6 663.6 M386.8 665.3 Q389.5 664.5 392 665.5" fill="none" stroke="#111" stroke-width="0.9"/>
<!-- excel -->
<rect x="416" y="657" width="8.5" height="11.5" fill="#f0f0f0"/>
<path d="M418 659.5 H423.5 M418 661.5 H423.5 M418 663.5 H423.5 M418 665.5 H423.5" stroke="#1d6f42" stroke-width="0.8"/>
<rect x="411.7" y="657.8" width="7.5" height="10" fill="#1d6f42"/>
<text x="412.8" y="665.5" style="font-size:7px;font-weight:bold;fill:#fff">X</text>
<!-- ltspice -->
<g transform="translate(440 655)"><path d="M1.5 2.5 V14.5 L10.7 8.3 M1.5 2.8 L3.6 4.3" fill="none" stroke="#202020" stroke-width="1.1"/>
 <path d="M4.9 3 H6.8 L5.1 7.1 H8.2 L7.7 8.7 H2.7 Z" fill="#a00c0c"/>
 <path d="M7.8 2.5 H13.9 L13.3 4.1 H11.9 L10.2 8.4 H8.7 L10.4 4.1 H7.3 Z" fill="#a00c0c"/></g>
<!-- tray -->
<circle cx="951.5" cy="662.5" r="5.5" fill="#d4d4d4"/>
<rect x="964.5" y="657" width="12" height="12" fill="#101010"/>
<path d="M966 663.5 Q970 659 975 661 L975 666.5 Q970 668 966 663.5 Z" fill="#74b71b"/>
<path d="M968.5 663.5 Q970.5 661.8 972.8 663.5 Q970.5 665.2 968.5 663.5" fill="#101010"/>
<rect x="984" y="657.5" width="11" height="11" rx="3.5" fill="#4a8cf7"/>
<rect x="986.3" y="661" width="4.4" height="4" rx="0.7" fill="#fff"/><path d="M991 662.2 L993 661 V665 L991 663.8 Z" fill="#fff"/>
<rect x="1005.5" y="657" width="5" height="9.5" rx="1.5" fill="#f2f2f2"/>
<path d="M1004 664 Q1004 667.5 1008 667.5 Q1012 667.5 1012 664 M1008 667.5 V670 M1006 670 H1010" fill="none" stroke="#ddd" stroke-width="0.9"/>
<rect x="1022" y="661" width="11.5" height="6" rx="0.8" fill="none" stroke="#f0f0f0" stroke-width="1"/>
<rect x="1023.5" y="662.5" width="7.5" height="3" fill="#f0f0f0"/>
<circle cx="1021.5" cy="660.5" r="1.3" fill="none" stroke="#f0f0f0" stroke-width="0.9"/>
<g fill="none" stroke="#cfcfcf" stroke-width="0.9">
<path d="M1041.5 667 A9 9 0 0 1 1050.5 658"/><path d="M1043.8 667 A6.7 6.7 0 0 1 1050.5 660.3"/><path d="M1046.1 667 A4.4 4.4 0 0 1 1050.5 662.6"/>
</g>
<circle cx="1050" cy="667" r="1" fill="#fff"/>
<path d="M1058.3 661.5 H1060.5 L1063.5 658.5 V668.5 L1060.5 665.5 H1058.3 Z" fill="none" stroke="#e8e8e8" stroke-width="0.9"/>
<path d="M1065.5 661 Q1067 663.5 1065.5 666 M1067.5 659.5 Q1070 663.5 1067.5 667.5 M1069.5 658.3 Q1072.5 663.5 1069.5 668.8" fill="none" stroke="#d8d8d8" stroke-width="0.8"/>
<rect x="1077.4" y="658.5" width="18" height="10" rx="1.2" fill="none" stroke="#e8e8e8" stroke-width="0.9"/>
<path d="M1079.5 661.2 H1093.5 M1079.5 663.5 H1093.5 M1080.5 665.8 H1092.5" stroke="#e0e0e0" stroke-width="0.9" stroke-dasharray="1.2 0.8"/>
<text x="1104.2" y="666.9" textLength="17" lengthAdjust="spacingAndGlyphs" style="font-size:9.4px;fill:#f4f4f4">TUR</text>
<text x="1132.4" y="666.9" textLength="21.5" lengthAdjust="spacingAndGlyphs" style="font-size:9.4px;fill:#f4f4f4">13:38</text>
<path d="M1168.5 657.5 H1180.5 V667 H1173 L1170.5 669.5 V667 H1168.5 Z" fill="none" stroke="#eaeaea" stroke-width="0.9"/>
<rect x="1196" y="651" width="0.7" height="24" fill="#707070"/>
</svg>

</body></html>
